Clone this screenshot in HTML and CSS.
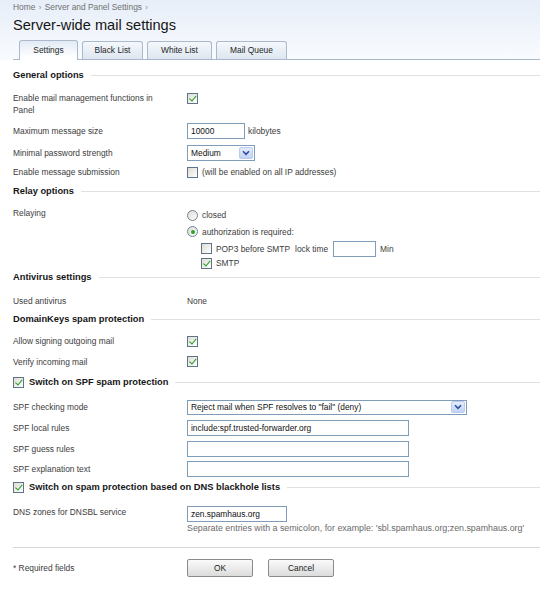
FILE: index.html
```html
<!DOCTYPE html>
<html>
<head>
<meta charset="utf-8">
<title>Server-wide mail settings</title>
<link rel="stylesheet" href="styles.css">
</head>
<body>
<div class="header">
  <div class="crumbs">Home <span class="sep">›</span> Server and Panel Settings <span class="sep">›</span></div>
  <h1 class="title">Server-wide mail settings</h1>
  <div class="tabs">
    <div class="tab active w1">Settings</div>
    <div class="tab w2">Black List</div>
    <div class="tab w3">White List</div>
    <div class="tab w4">Mail Queue</div>
  </div>
</div>

<div class="content">
  <div class="sec mt7">General options</div>

  <div class="row tall">
    <div class="lbl two">Enable mail management functions in Panel</div>
    <div class="val top"><span class="cb on"></span></div>
  </div>
  <div class="row h22">
    <div class="lbl">Maximum message size</div>
    <div class="val"><input class="inp w58" value="10000"><span class="after">kilobytes</span></div>
  </div>
  <div class="row h22">
    <div class="lbl">Minimal password strength</div>
    <div class="val"><div class="sel w68"><span class="sel-text">Medium</span><span class="sel-btn"><svg viewBox="0 0 8 6" width="8" height="6"><path d="M1 1.2 L4 4.3 L7 1.2" fill="none" stroke="#2b4f9e" stroke-width="1.6"/></svg></span></div></div>
  </div>
  <div class="row h16">
    <div class="lbl">Enable message submission</div>
    <div class="val"><span class="cb"></span><span class="cbtext">(will be enabled on all IP addresses)</span></div>
  </div>

  <div class="sec mt3">Relay options</div>

  <div class="row block mt8">
    <div class="lbl line12">Relaying</div>
    <div class="val col">
      <div class="opt h16"><span class="radio"></span><span class="cbtext">closed</span></div>
      <div class="opt h17"><span class="radio on"></span><span class="cbtext">authorization is required:</span></div>
      <div class="opt h17 indent"><span class="cb"></span><span class="cbtext">POP3 before SMTP</span><span class="lock">lock time</span><input class="inp w43" value=""><span class="after2">Min</span></div>
      <div class="opt h12 indent"><span class="cb on"></span><span class="cbtext">SMTP</span></div>
    </div>
  </div>

  <div class="sec">Antivirus settings</div>
  <div class="row h21 mt5">
    <div class="lbl">Used antivirus</div>
    <div class="val">None</div>
  </div>

  <div class="sec">DomainKeys spam protection</div>
  <div class="row h20 mt4">
    <div class="lbl">Allow signing outgoing mail</div>
    <div class="val"><span class="cb on"></span></div>
  </div>
  <div class="row h21">
    <div class="lbl">Verify incoming mail</div>
    <div class="val"><span class="cb on"></span></div>
  </div>

  <div class="sec mt2"><span class="cb on"></span><span class="sec-text">Switch on SPF spam protection</span></div>
  <div class="row h20 mt7">
    <div class="lbl">SPF checking mode</div>
    <div class="val"><div class="sel w280"><span class="sel-text">Reject mail when SPF resolves to "fail" (deny)</span><span class="sel-btn"><svg viewBox="0 0 8 6" width="8" height="6"><path d="M1 1.2 L4 4.3 L7 1.2" fill="none" stroke="#2b4f9e" stroke-width="1.6"/></svg></span></div></div>
  </div>
  <div class="row h21">
    <div class="lbl">SPF local rules</div>
    <div class="val"><input class="inp w222" value="include:spf.trusted-forwarder.org"></div>
  </div>
  <div class="row h21">
    <div class="lbl">SPF guess rules</div>
    <div class="val"><input class="inp w222" value=""></div>
  </div>
  <div class="row h20">
    <div class="lbl">SPF explanation text</div>
    <div class="val"><input class="inp w222" value=""></div>
  </div>

  <div class="sec"><span class="cb on"></span><span class="sec-text">Switch on spam protection based on DNS blackhole lists</span></div>
  <div class="row block mt11">
    <div class="lbl line12">DNS zones for DNSBL service</div>
    <div class="val col">
      <input class="inp w100" value="zen.spamhaus.org">
      <div class="hint">Separate entries with a semicolon, for example: 'sbl.spamhaus.org;zen.spamhaus.org'</div>
    </div>
  </div>

  <div class="divider"></div>

  <div class="row h18 mt11">
    <div class="lbl">* Required fields</div>
    <div class="val buttons"><button class="btn">OK</button><button class="btn">Cancel</button></div>
  </div>
</div>
</body>
</html>
```

FILE: styles.css
```css
html, body {
  margin: 0;
  padding: 0;
  background: #ffffff;
}

body {
  font-family: "Liberation Sans", Arial, sans-serif;
  font-size: 8.4px;
  color: #3c3c3c;
}

/* ---------- header ---------- */
.header {
  background: linear-gradient(#e7eef8, #f9fbfe);
  padding: 1px 0 0 13px;
}

.crumbs {
  line-height: 12px;
  height: 12px;
  color: #707070;
}

.crumbs .sep {
  font-size: 8px;
  color: #8a8a8a;
  margin: 0 1px;
}

.title {
  margin: 4px 0 0 0;
  font-family: "Liberation Sans", Arial, sans-serif;
  font-weight: normal;
  font-size: 14.6px;
  line-height: 17px;
  height: 17px;
  color: #151515;
}

.tabs {
  margin-top: 6px;
  height: 19px;
  display: flex;
  align-items: flex-end;
  gap: 4px;
  padding-left: 6px;
  border-bottom: 1px solid #a9b8cb;
}

.tab {
  box-sizing: border-box;
  height: 18px;
  line-height: 17px;
  text-align: center;
  border: 1px solid #aab9cc;
  border-bottom: none;
  border-radius: 3px 3px 0 0;
  background: linear-gradient(#f5f8fc, #dde6f0);
  color: #1f1f1f;
}

.tab.active {
  height: 20px;
  line-height: 19px;
  margin-bottom: -1px;
  background: linear-gradient(#e2eaf5, #ffffff 85%);
}

.w1 { width: 59px; }
.w2 { width: 61px; }
.w3 { width: 65px; }
.w4 { width: 71px; }

/* ---------- content ---------- */
.content {
  padding-left: 13px;
}

.sec {
  display: flex;
  align-items: center;
  height: 16px;
  font-weight: bold;
  font-size: 9.3px;
  color: #161616;
}

.sec::after {
  content: "";
  flex: 1;
  height: 1px;
  background: #e0e0e0;
  margin-left: 7px;
}

.sec .cb {
  margin-right: 5px;
}

.row {
  display: grid;
  grid-template-columns: 174px 1fr;
  align-items: center;
}

.row.tall {
  align-items: start;
  padding: 9px 0 4px 0;
}

.row.block {
  align-items: start;
}

.lbl {
  padding-right: 16px;
  color: #3c3c3c;
}

.lbl.two,
.line12 {
  line-height: 12px;
}

.val {
  display: flex;
  align-items: center;
  color: #3c3c3c;
}

.val.top {
  align-items: flex-start;
  padding-top: 1px;
}

.val.col {
  flex-direction: column;
  align-items: flex-start;
}

.opt {
  display: flex;
  align-items: center;
}

.opt.indent {
  padding-left: 14px;
}

.h12 { height: 12px; }
.h16 { height: 16px; }
.h17 { height: 17px; }
.h18 { height: 18px; }
.h20 { height: 20px; }
.h21 { height: 21px; }
.h22 { height: 22px; }

.mt2 { margin-top: 2px; }
.mt3 { margin-top: 3px; }
.mt4 { margin-top: 4px; }
.mt5 { margin-top: 5px; }
.mt7 { margin-top: 7px; }
.mt8 { margin-top: 8px; }
.mt11 { margin-top: 11px; }

/* ---------- checkbox / radio ---------- */
.cb {
  position: relative;
  display: inline-block;
  box-sizing: border-box;
  width: 11px;
  height: 11px;
  border: 1px solid #5f7487;
  background: linear-gradient(135deg, #dedcd4, #ffffff);
  flex: none;
}

.cb.on::after {
  content: "";
  position: absolute;
  left: 3px;
  top: 0px;
  width: 2.5px;
  height: 5.5px;
  border: solid #249c24;
  border-width: 0 1.8px 1.8px 0;
  transform: rotate(40deg);
}

.radio {
  position: relative;
  display: inline-block;
  box-sizing: border-box;
  width: 11px;
  height: 11px;
  border-radius: 50%;
  border: 1px solid #6e8294;
  background: linear-gradient(135deg, #dcdad2, #ffffff);
  flex: none;
}

.radio.on::after {
  content: "";
  position: absolute;
  left: 2.5px;
  top: 2.5px;
  width: 4px;
  height: 4px;
  border-radius: 50%;
  background: #2aa52a;
}

.cbtext {
  margin-left: 4px;
}

.lock {
  margin-left: 5px;
}

/* ---------- inputs ---------- */
.inp {
  box-sizing: border-box;
  height: 16px;
  border: 1px solid #7f9db9;
  background: #ffffff;
  font-family: "Liberation Sans", Arial, sans-serif;
  font-size: 8.4px;
  color: #111;
  padding: 0 3px;
  margin: 0;
  outline: none;
}

.w43 { width: 43px; margin-left: 5px; }
.w58 { width: 58px; }
.w100 { width: 100px; }
.w222 { width: 222px; }

.after {
  margin-left: 3px;
}

.after2 {
  margin-left: 4px;
}

.sel {
  box-sizing: border-box;
  display: flex;
  align-items: center;
  height: 16px;
  border: 1px solid #7f9db9;
  background: #ffffff;
  color: #111;
}

.w68 { width: 68px; }
.w280 { width: 280px; height: 15px; }

.sel-text {
  flex: 1;
  padding-left: 3px;
  white-space: nowrap;
  overflow: hidden;
}

.sel-btn {
  box-sizing: border-box;
  width: 14px;
  height: 12px;
  margin-right: 1px;
  display: flex;
  align-items: center;
  justify-content: center;
  background: linear-gradient(#e4ecfb, #c2d3f5);
  border: 1px solid #b9cbee;
  border-radius: 2px;
}

.hint {
  line-height: 12px;
  font-size: 8.85px;
  color: #6a6a6a;
}

/* ---------- footer ---------- */
.divider {
  margin-top: 13px;
  height: 1px;
  background: #d8d8d8;
}

.buttons {
  gap: 15px;
}

.btn {
  box-sizing: border-box;
  width: 66px;
  height: 18px;
  border: 1px solid #8a8a8a;
  border-radius: 2px;
  background: linear-gradient(#fafafa, #dcdcdc);
  font-family: "Liberation Sans", Arial, sans-serif;
  font-size: 8.4px;
  color: #1c1c1c;
  padding: 0;
}
```
